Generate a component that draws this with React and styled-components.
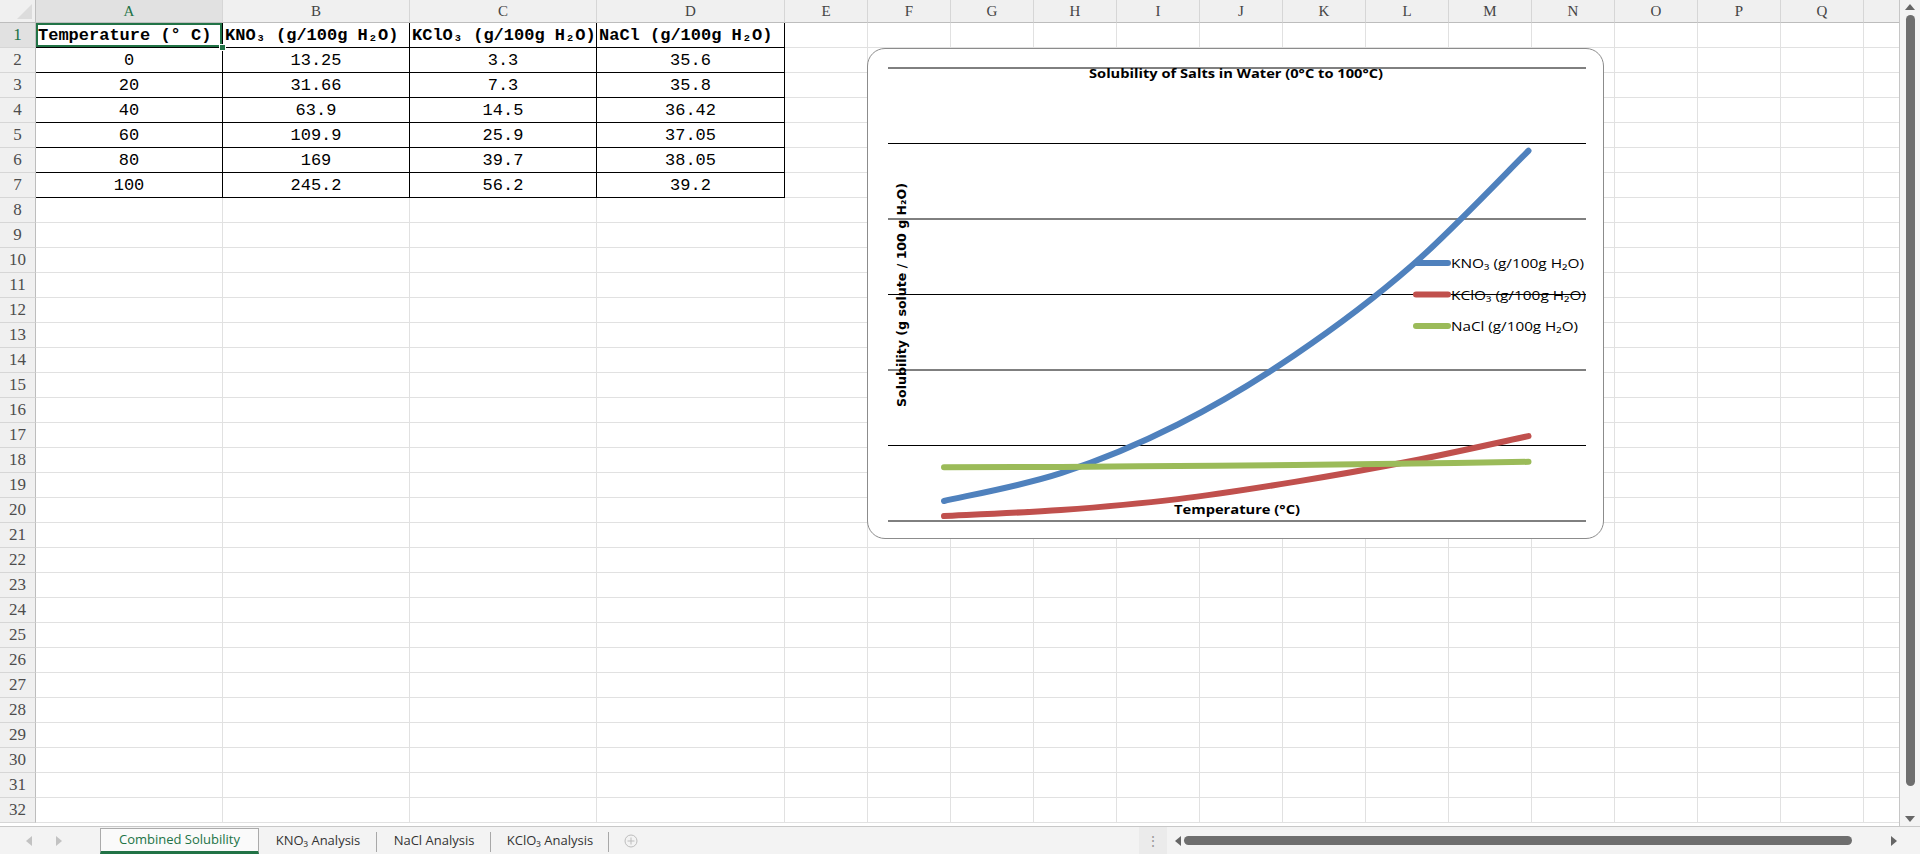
import { createGlobalStyle } from 'styled-components';
import styled from 'styled-components';

const GlobalStyle = createGlobalStyle`
    html, body {
        margin: 0;
        padding: 0;
        overflow: hidden;
        background: #ffffff;
        font-family: 'Liberation Sans', Arial, sans-serif;
    }
`;

const GREEN = '#217346';
const COLS = ['A', 'B', 'C', 'D', 'E', 'F', 'G', 'H', 'I', 'J', 'K', 'L', 'M', 'N', 'O', 'P', 'Q', 'R'];
const WIDTHS = [187, 187, 187, 188];
const ROW_COUNT = 32;

const HEADERS = ['Temperature (° C)', 'KNO₃ (g/100g H₂O)', 'KClO₃ (g/100g H₂O)', 'NaCl (g/100g H₂O)'];
const DATA = [
    ['0', '13.25', '3.3', '35.6'],
    ['20', '31.66', '7.3', '35.8'],
    ['40', '63.9', '14.5', '36.42'],
    ['60', '109.9', '25.9', '37.05'],
    ['80', '169', '39.7', '38.05'],
    ['100', '245.2', '56.2', '39.2'],
];

const SERIES = [
    { name: 'KNO₃ (g/100g H₂O)', color: '#4F81BD', values: [13.25, 31.66, 63.9, 109.9, 169, 245.2], width: 133 },
    { name: 'KClO₃ (g/100g H₂O)', color: '#C0504D', values: [3.3, 7.3, 14.5, 25.9, 39.7, 56.2], width: 135 },
    { name: 'NaCl (g/100g H₂O)', color: '#9BBB59', values: [35.6, 35.8, 36.42, 37.05, 38.05, 39.2], width: 127 },
];

const Window = styled.div`
    width: 1920px;
    height: 854px;
    display: flex;
    flex-direction: column;
    background: #ffffff;
`;

const Main = styled.div`
    height: 826px;
    display: flex;
`;

const Viewport = styled.div`
    flex: 1;
    position: relative;
    overflow: hidden;
    border-right: 1px solid #c6c6c6;
`;

const Grid = styled.div`
    display: grid;
    grid-template-columns: 36px ${WIDTHS.map((w) => `${w}px`).join(' ')} repeat(14, 83px);
    grid-template-rows: 23px repeat(${ROW_COUNT}, 25px);
`;

const Corner = styled.div`
    position: relative;
    background: #f0f0f0;
    border-right: 1px solid #bdbdbd;
    border-bottom: 1px solid #bdbdbd;

    &::after {
        content: '';
        position: absolute;
        right: 3px;
        bottom: 3px;
        border-left: 15px solid transparent;
        border-bottom: 15px solid #dcdcdc;
    }
`;

const ColHeader = styled.div`
    display: flex;
    align-items: center;
    justify-content: center;
    background: ${(p) => (p.$active ? '#e1e1e1' : '#f0f0f0')};
    border-right: 1px solid #d6d6d6;
    border-bottom: 1px solid #bdbdbd;
    color: ${(p) => (p.$active ? GREEN : '#444444')};
    font-family: 'Liberation Serif', serif;
    font-size: 15px;
`;

const RowHeader = styled.div`
    display: flex;
    align-items: center;
    justify-content: center;
    background: ${(p) => (p.$active ? '#e1e1e1' : '#f0f0f0')};
    border-right: 1px solid #bdbdbd;
    border-bottom: 1px solid #d6d6d6;
    color: ${(p) => (p.$active ? GREEN : '#4d4d4d')};
    font-family: 'Liberation Serif', serif;
    font-size: 17px;
`;

const Cell = styled.div`
    position: relative;
    display: flex;
    align-items: center;
    justify-content: ${(p) => (p.$center ? 'center' : 'flex-start')};
    padding: 0 2px;
    border-right: 1px solid ${(p) => (p.$boxed ? '#000000' : '#e1e1e1')};
    border-bottom: 1px solid ${(p) => (p.$boxed ? '#000000' : '#e1e1e1')};
    font-family: 'Liberation Mono', 'DejaVu Sans Mono', monospace;
    font-size: 17px;
    font-weight: ${(p) => (p.$bold ? 700 : 400)};
    color: #000000;
    white-space: nowrap;
    overflow: ${(p) => (p.$selected ? 'visible' : 'hidden')};
    z-index: ${(p) => (p.$selected ? 2 : 'auto')};
    box-shadow: ${(p) => (p.$selected ? `inset 0 0 0 2px ${GREEN}` : 'none')};

    &::after {
        content: '';
        display: ${(p) => (p.$selected ? 'block' : 'none')};
        position: absolute;
        right: -4px;
        bottom: -4px;
        width: 5px;
        height: 5px;
        background: ${GREEN};
        border: 1px solid #ffffff;
    }
`;

const ChartFrame = styled.div`
    position: absolute;
    left: 867px;
    top: 48px;
    width: 737px;
    height: 491px;
    box-sizing: border-box;
    background: #ffffff;
    border: 1px solid #8c8c8c;
    border-radius: 18px;
    overflow: hidden;
    z-index: 5;
`;

const VScroll = styled.div`
    width: 20px;
    background: #f3f3f3;
    display: flex;
    flex-direction: column;
    align-items: center;
    padding-top: 4px;
    box-sizing: border-box;
`;

const Arrow = styled.div`
    width: 0;
    height: 0;
    border-left: ${(p) => (p.$dir === 'right' ? '6px solid #666' : p.$dir === 'left' ? 'none' : '5px solid transparent')};
    border-right: ${(p) => (p.$dir === 'left' ? '6px solid #666' : p.$dir === 'right' ? 'none' : '5px solid transparent')};
    border-top: ${(p) => (p.$dir === 'down' ? '6px solid #666' : p.$dir === 'up' ? 'none' : '5px solid transparent')};
    border-bottom: ${(p) => (p.$dir === 'up' ? '6px solid #666' : p.$dir === 'down' ? 'none' : '5px solid transparent')};
    opacity: ${(p) => (p.$faint ? 0.35 : 1)};
`;

const VThumb = styled.div`
    width: 9px;
    height: 771px;
    margin: 5px 0 30px;
    border-radius: 5px;
    background: #6e6e6e;
`;

const TabBar = styled.div`
    flex: 1;
    display: flex;
    align-items: stretch;
    background: #f3f3f3;
    border-top: 1px solid #c8c8c8;
    font-family: 'Open Sans', 'Noto Sans', sans-serif;
    font-size: 13px;
`;

const Nav = styled.div`
    width: 100px;
    display: flex;
    align-items: center;
    gap: 24px;
    padding-left: 26px;
    box-sizing: border-box;
`;

const Tab = styled.div`
    display: flex;
    align-items: center;
    justify-content: center;
    width: ${(p) => p.$w}px;
    box-sizing: border-box;
    margin-top: ${(p) => (p.$active ? '1px' : '0')};
    color: ${(p) => (p.$active ? GREEN : '#333333')};
    background: ${(p) => (p.$active ? '#fafafa' : 'transparent')};
    border: ${(p) => (p.$active ? '1px solid #ababab' : 'none')};
    border-bottom: ${(p) => (p.$active ? `3px solid ${GREEN}` : 'none')};
    position: relative;
    padding-bottom: 2px;

    &::after {
        content: '';
        display: ${(p) => (p.$active ? 'none' : 'block')};
        position: absolute;
        right: 0;
        top: 5px;
        bottom: 2px;
        width: 1px;
        background: #a8a8a8;
    }
`;

const AddTab = styled.div`
    width: 40px;
    display: flex;
    align-items: center;
    justify-content: center;
    padding-left: 2px;
`;

const Spacer = styled.div`
    flex: 1;
`;

const Splitter = styled.div`
    width: 28px;
    display: flex;
    align-items: center;
    justify-content: center;
    background: #ebebeb;
    color: #9a9a9a;
    font-size: 14px;
    line-height: 1;
`;

const HScroll = styled.div`
    width: 753px;
    display: flex;
    align-items: center;
    padding-left: 8px;
    padding-right: 23px;
    box-sizing: border-box;
`;

const HThumb = styled.div`
    width: 668px;
    height: 9px;
    margin-left: 3px;
    border-radius: 5px;
    background: #6e6e6e;
`;

// chart geometry, relative to the frame
const Y0 = 472;
const YS = 75.5 / 50;
const X0 = 76;
const XS = 116.9;

const toPath = (values) => {
    const pts = values.map((v, i) => [X0 + i * XS, Y0 - v * YS]);
    let d = `M${pts[0][0]},${pts[0][1]}`;
    for (let i = 0; i < pts.length - 1; i++) {
        const p0 = pts[Math.max(i - 1, 0)];
        const p1 = pts[i];
        const p2 = pts[i + 1];
        const p3 = pts[Math.min(i + 2, pts.length - 1)];
        const c1 = [p1[0] + (p2[0] - p0[0]) / 6, p1[1] + (p2[1] - p0[1]) / 6];
        const c2 = [p2[0] - (p3[0] - p1[0]) / 6, p2[1] - (p3[1] - p1[1]) / 6];
        d += ` C${c1[0]},${c1[1]} ${c2[0]},${c2[1]} ${p2[0]},${p2[1]}`;
    }
    return d;
};

const SolubilityChart = () => (
    <svg width="735" height="489" viewBox="0 0 735 489">
        {[0, 1, 2, 3, 4, 5, 6].map((k) => (
            <line key={k} x1="20" x2="718" y1={Y0 - k * 75.5} y2={Y0 - k * 75.5} stroke="#000" strokeWidth="1" />
        ))}
        <text
            x="368"
            y="29"
            textAnchor="middle"
            fontFamily="'Open Sans', sans-serif"
            fontWeight="700"
            fontSize="13"
            textLength="294"
            lengthAdjust="spacingAndGlyphs"
        >
            Solubility of Salts in Water (0°C to 100°C)
        </text>
        <text
            transform="translate(38,246) rotate(-90)"
            textAnchor="middle"
            fontFamily="'DejaVu Sans', sans-serif"
            fontWeight="700"
            fontSize="12"
            textLength="224"
            lengthAdjust="spacingAndGlyphs"
        >
            Solubility (g solute / 100 g H₂O)
        </text>
        {SERIES.map((s) => (
            <path key={s.name} d={toPath(s.values)} fill="none" stroke={s.color} strokeWidth="6" strokeLinecap="round" />
        ))}
        <text
            x="369"
            y="465"
            textAnchor="middle"
            fontFamily="'Open Sans', sans-serif"
            fontWeight="700"
            fontSize="13"
            textLength="126"
            lengthAdjust="spacingAndGlyphs"
        >
            Temperature (°C)
        </text>
        {SERIES.map((s, i) => {
            const y = 214 + i * 31.5;
            return (
                <g key={s.name}>
                    <line x1="548" x2="580" y1={y} y2={y} stroke={s.color} strokeWidth="6" strokeLinecap="round" />
                    <text
                        x="583"
                        y={y + 5}
                        fontFamily="'Open Sans', sans-serif"
                        fontSize="13.5"
                        textLength={s.width}
                        lengthAdjust="spacingAndGlyphs"
                    >
                        {s.name}
                    </text>
                </g>
            );
        })}
    </svg>
);

const AddIcon = () => (
    <svg width="14" height="14" viewBox="0 0 14 14">
        <circle cx="7" cy="7" r="6" fill="none" stroke="#bdbdbd" strokeWidth="1" />
        <path d="M7 3.5v7M3.5 7h7" stroke="#bdbdbd" strokeWidth="1" />
    </svg>
);

const App = () => {
    const rows = [];
    for (let r = 1; r <= ROW_COUNT; r++) {
        rows.push(
            <RowHeader key={`rh${r}`} $active={r === 1}>
                {r}
            </RowHeader>,
        );
        COLS.forEach((c, ci) => {
            let text = '';
            if (ci < 4 && r === 1) text = HEADERS[ci];
            if (ci < 4 && r > 1 && r <= 7) text = DATA[r - 2][ci];
            rows.push(
                <Cell
                    key={`${c}${r}`}
                    $boxed={ci < 4 && r <= 7}
                    $bold={r === 1}
                    $center={r > 1}
                    $selected={r === 1 && ci === 0}
                >
                    {text}
                </Cell>,
            );
        });
    }

    return (
        <Window>
            <GlobalStyle />
            <Main>
                <Viewport>
                    <Grid>
                        <Corner />
                        {COLS.map((c) => (
                            <ColHeader key={c} $active={c === 'A'}>
                                {/* R sits half behind the scrollbar, its letter isn't shown */}
                                {c === 'R' ? '' : c}
                            </ColHeader>
                        ))}
                        {rows}
                    </Grid>
                    <ChartFrame>
                        <SolubilityChart />
                    </ChartFrame>
                </Viewport>
                <VScroll>
                    <Arrow $dir="up" />
                    <VThumb />
                    <Arrow $dir="down" />
                </VScroll>
            </Main>
            <TabBar>
                <Nav>
                    <Arrow $dir="left" $faint />
                    <Arrow $dir="right" $faint />
                </Nav>
                <Tab $active $w={159}>Combined Solubility</Tab>
                <Tab $w={118}>KNO₃ Analysis</Tab>
                <Tab $w={114}>NaCl Analysis</Tab>
                <Tab $w={118}>KClO₃ Analysis</Tab>
                <AddTab>
                    <AddIcon />
                </AddTab>
                <Spacer />
                <Splitter>⋮</Splitter>
                <HScroll>
                    <Arrow $dir="left" />
                    <HThumb />
                    <Spacer />
                    <Arrow $dir="right" />
                </HScroll>
            </TabBar>
        </Window>
    );
};

export default App;
